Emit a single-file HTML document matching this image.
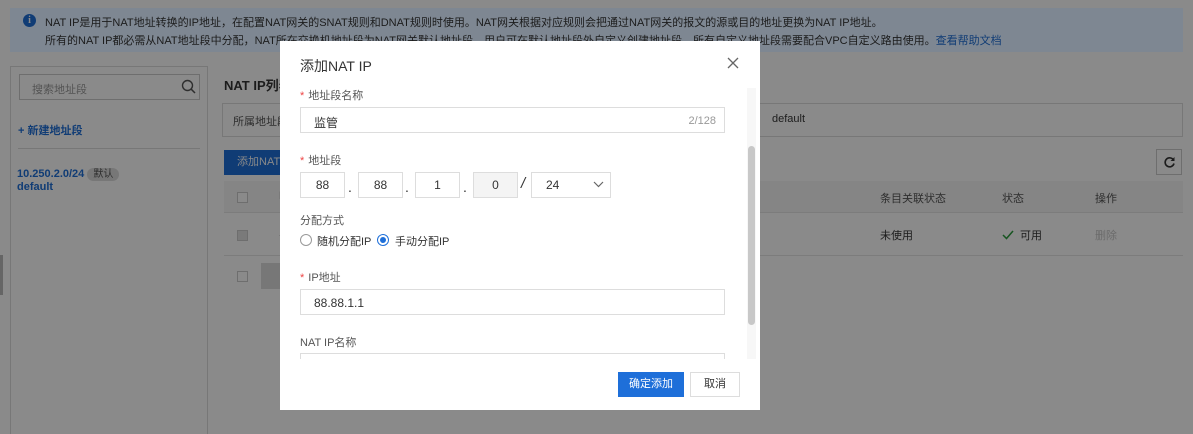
<!DOCTYPE html>
<html><head><meta charset="utf-8">
<style>
*{box-sizing:border-box;margin:0;padding:0}
html,body{width:1193px;height:434px;overflow:hidden}
body{position:relative;background:#8a8a8a;font-family:"Liberation Sans","Noto Sans CJK SC",sans-serif;font-size:12px;color:#1c1c1c}
.abs{position:absolute}
.banner{left:10px;top:8px;width:1173px;height:44px;background:#7e8792;}
.banner .t{left:35px;font-size:11px;color:#1c1c1c;white-space:nowrap}
.info{left:13px;top:6px;width:13px;height:13px;border-radius:50%;background:#103c75;color:#8a8a8a;font-size:10px;font-weight:bold;text-align:center;line-height:13px;font-family:"Liberation Serif",serif}
.left{left:10px;top:66px;width:198px;height:368px;border:1px solid #777;border-bottom:none}
.search{left:8px;top:7px;width:181px;height:26px;border:1px solid #6e6e6e;color:#535353;font-size:11px;padding:6px 0 0 12px}
.main-title{left:224px;top:75px;font-size:13px;font-weight:bold;color:#1c1c1c}
.filter{left:222px;top:103px;width:961px;height:34px;border:1px solid #777}
.th{left:224px;top:181px;width:959px;height:32px;background:#858585;border-bottom:1px solid #7c7c7c}
.row{left:224px;top:213px;width:959px;height:43px;border-bottom:1px solid #7c7c7c}
.cb{width:11px;height:11px;border:1px solid #6e6e6e;background:#8a8a8a}
.modal{left:280px;top:41px;width:480px;height:369px;background:#fff;z-index:10;color:#333}
.lbl{left:20px;font-size:11px;color:#555}
.lbl .r{color:#e44;margin-right:4px}
.inp{border:1px solid #ddd;height:26px;font-size:12px;color:#333;background:#fff}
.ipb{width:45px;text-align:center;line-height:24px;top:131px}
.dot{top:138px;font-size:14px;color:#333}
</style></head><body>
<div class="abs banner">
  <div class="abs info">i</div>
  <div class="abs t" style="top:6px">NAT IP是用于NAT地址转换的IP地址，在配置NAT网关的SNAT规则和DNAT规则时使用。NAT网关根据对应规则会把通过NAT网关的报文的源或目的地址更换为NAT IP地址。</div>
  <div class="abs t" style="top:24px">所有的NAT IP都必需从NAT地址段中分配，NAT所在交换机地址段为NAT网关默认地址段，用户可在默认地址段外自定义创建地址段，所有自定义地址段需要配合VPC自定义路由使用。<span style="color:#103c75">查看帮助文档</span></div>
</div>
<div class="abs left">
  <div class="abs search">搜索地址段</div>
  <svg class="abs" style="left:170px;top:12px" width="15" height="15" viewBox="0 0 15 15"><circle cx="6.5" cy="6.5" r="5" fill="none" stroke="#2e2e2e" stroke-width="1.4"/><path d="M10.2 10.2L14 14" stroke="#2e2e2e" stroke-width="1.5"/></svg>
  <div class="abs" style="left:7px;top:55px;color:#103c75;font-size:11px;font-weight:bold">+ 新建地址段</div>
  <div class="abs" style="left:7px;top:81px;width:182px;border-top:1px solid #777"></div>
  <div class="abs" style="left:6px;top:98px;color:#103c75;font-size:11px;font-weight:bold">10.250.2.0/24 <span style="background:#777;color:#2e2e2e;border-radius:8px;padding:1px 6px;font-weight:normal;font-size:10px">默认</span></div>
  <div class="abs" style="left:6px;top:114px;color:#103c75;font-size:11px;font-weight:bold">default</div>
</div>
<div class="abs" style="left:0;top:255px;width:3px;height:40px;background:#656565"></div>
<div class="abs main-title">NAT IP列表</div>
<div class="abs filter"><span class="abs" style="left:10px;top:9px;font-size:11px;color:#2e2e2e">所属地址段</span><span class="abs" style="left:549px;top:9px;font-size:11px">default</span></div>
<div class="abs" style="left:224px;top:150px;width:70px;height:25px;line-height:25px;font-size:11px;padding-left:13px;background:#103c75;color:#8a8a8a">添加NAT IP</div>
<div class="abs" style="left:1156px;top:149px;width:26px;height:26px;border:1px solid #6e6e6e"><svg class="abs" style="left:6px;top:6px" width="13" height="13" viewBox="0 0 13 13"><path d="M10.5 4A4.5 4.5 0 1 0 11 7.5" fill="none" stroke="#1c1c1c" stroke-width="1.6"/><path d="M11.5 1v4h-4z" fill="#1c1c1c"/></svg></div>
<div class="abs th"><div class="abs cb" style="left:13px;top:11px"></div><span class="abs" style="left:55px;top:9px;font-size:11px">NAT IP</span><span class="abs" style="left:656px;top:9px;font-size:11px;color:#2e2e2e">条目关联状态</span><span class="abs" style="left:778px;top:9px;font-size:11px;color:#2e2e2e">状态</span><span class="abs" style="left:871px;top:9px;font-size:11px;color:#2e2e2e">操作</span></div>
<div class="abs row"><div class="abs cb" style="left:13px;top:17px;background:#7a7a7a"></div><span class="abs" style="left:55px;top:14px;font-size:11px">10.250.2.1</span><span class="abs" style="left:656px;top:14px;font-size:11px">未使用</span>
<svg class="abs" style="left:778px;top:17px" width="12" height="10" viewBox="0 0 12 10"><path d="M1 5l3.5 3.5L11 1" fill="none" stroke="#175521" stroke-width="1.5"/></svg><span class="abs" style="left:796px;top:14px;font-size:11px">可用</span><span class="abs" style="left:871px;top:14px;font-size:11px;color:#6b6b6b">删除</span></div>
<div class="abs cb" style="left:237px;top:271px"></div>
<div class="abs" style="left:261px;top:263px;width:60px;height:26px;background:#777"></div>

<div class="abs modal">
  <div class="abs" style="left:20px;top:15px;font-size:14px;color:#333">添加NAT IP</div>
  <svg class="abs" style="left:447px;top:16px" width="12" height="12" viewBox="0 0 12 12"><path d="M1 1L11 11M11 1L1 11" stroke="#666" stroke-width="1.3"/></svg>
  <div class="abs lbl" style="top:46px"><span class="r">*</span>地址段名称</div>
  <div class="abs inp" style="left:20px;top:66px;width:425px;padding:6px 0 0 13px">监管<span class="abs" style="right:8px;top:7px;font-size:11px;color:#999">2/128</span></div>
  <div class="abs lbl" style="top:111px"><span class="r">*</span>地址段</div>
  <div class="abs inp ipb" style="left:20px">88</div>
  <div class="abs dot" style="left:68px">.</div>
  <div class="abs inp ipb" style="left:78px">88</div>
  <div class="abs dot" style="left:125px">.</div>
  <div class="abs inp ipb" style="left:135px">1</div>
  <div class="abs dot" style="left:183px">.</div>
  <div class="abs inp ipb" style="left:193px;background:#f4f4f4">0</div>
  <div class="abs" style="left:241px;top:134px;font-size:15px;font-style:italic">/</div>
  <div class="abs inp" style="left:251px;top:131px;width:80px;line-height:24px;padding-left:14px">24
    <svg class="abs" style="left:61px;top:8px" width="11" height="7" viewBox="0 0 11 7"><path d="M1 1l4.5 4.5L10 1" fill="none" stroke="#666" stroke-width="1.2"/></svg></div>
  <div class="abs lbl" style="top:171px">分配方式</div>
  <div class="abs" style="left:20px;top:193px;width:12px;height:12px;border:1px solid #999;border-radius:50%"></div>
  <div class="abs" style="left:37px;top:192px;font-size:11px;color:#333">随机分配IP</div>
  <div class="abs" style="left:97px;top:193px;width:12px;height:12px;border:1px solid #1e6fd9;border-radius:50%"><div class="abs" style="left:2px;top:2px;width:6px;height:6px;border-radius:50%;background:#1e6fd9"></div></div>
  <div class="abs" style="left:115px;top:192px;font-size:11px;color:#333">手动分配IP</div>
  <div class="abs lbl" style="top:228px"><span class="r">*</span>IP地址</div>
  <div class="abs inp" style="left:20px;top:248px;width:425px;padding:6px 0 0 13px">88.88.1.1</div>
  <div class="abs lbl" style="top:293px">NAT IP名称</div>
  <div class="abs inp" style="left:20px;top:312px;width:425px;height:6px;border-bottom:none"></div>
  <div class="abs" style="left:467px;top:47px;width:9px;height:271px;background:#f7f7f7"></div>
  <div class="abs" style="left:468px;top:105px;width:7px;height:179px;background:#c8c8c8;border-radius:4px"></div>
  <div class="abs" style="left:338px;top:331px;width:66px;height:25px;line-height:25px;font-size:11px;background:#1e6fd9;color:#fff;text-align:center">确定添加</div>
  <div class="abs" style="left:410px;top:331px;width:50px;height:25px;line-height:23px;border:1px solid #ddd;text-align:center;font-size:11px;color:#333">取消</div>
</div>
</body></html>
